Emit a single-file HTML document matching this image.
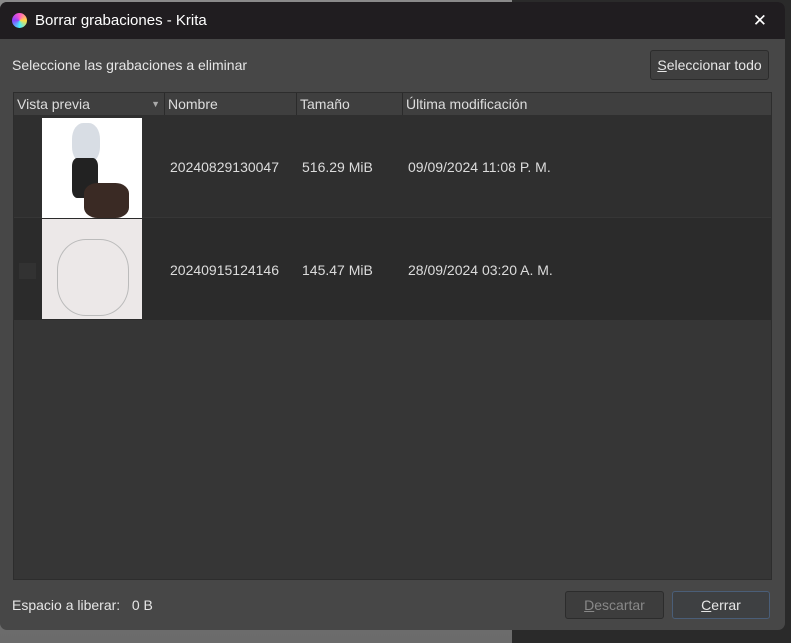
<!DOCTYPE html>
<html><head><style>
body{margin:0;width:791px;height:643px;overflow:hidden;background:#2a2a2a;font-family:"Liberation Sans",sans-serif;position:relative}
.bgl{position:absolute;left:0;top:0;width:512px;height:643px;background:linear-gradient(#8a8a8a,#6b6b6b)}
.win{position:absolute;left:0;top:2px;width:785px;height:628px;background:#474747;border-radius:7px;overflow:hidden}
.title{height:37px;background:#201d20;color:#fff;font-size:15px;line-height:37px;padding-left:35px;position:relative}
.t{position:absolute;color:#e6e6e6;font-size:14px}
.btn{position:absolute;border:1px solid #2c2c2c;border-radius:3px;background:#3f3f3f;color:#e6e6e6;font-size:14px;text-align:center}
.tbl{position:absolute;left:13px;top:90px;width:757px;height:486px;background:#363636;border:1px solid #2d2d2d}
.hd{position:absolute;top:0;height:22px;background:#3f3f3f;color:#ddd;font-size:14px;line-height:22px;padding-left:3px;box-sizing:border-box;border-right:1px solid #2b2b2b}
.row{position:absolute;left:0;width:757px;height:102px}
.cell{position:absolute;color:#dcdcdc;font-size:14px;top:44px}
</style></head><body>
<div class="bgl"></div>
<div class="win">
<div class="title"><span style="position:absolute;left:12px;top:11px;width:15px;height:15px;border-radius:50%;background:conic-gradient(#f5c,#fd4,#4ef,#84f,#f5c)"></span>Borrar grabaciones - Krita<span style="position:absolute;right:18px;top:0;font-size:17px;font-weight:300">✕</span></div>
<div class="t" style="left:12px;top:55px">Seleccione las grabaciones a eliminar</div>
<div class="btn" style="left:650px;top:48px;width:117px;height:28px;line-height:28px"><u>S</u>eleccionar todo</div>
<div class="tbl">
<div class="hd" style="left:0;width:151px">Vista previa<span style="position:absolute;right:4px;font-size:9px;color:#aaa">▼</span></div>
<div class="hd" style="left:151px;width:132px">Nombre</div>
<div class="hd" style="left:283px;width:106px">Tamaño</div>
<div class="hd" style="left:389px;width:368px;border-right:0">Última modificación</div>
<div class="row" style="top:22px;background:#2f2f2f">
<div style="position:absolute;left:28px;top:3px;width:100px;height:100px;background:#fff;overflow:hidden">
<div style="position:absolute;left:30px;top:5px;width:28px;height:40px;background:#d8dde4;border-radius:40%"></div>
<div style="position:absolute;left:30px;top:40px;width:26px;height:40px;background:#222;border-radius:20%"></div>
<div style="position:absolute;left:42px;top:65px;width:45px;height:35px;background:#3a2a24;border-radius:30%"></div>
</div>
<div class="cell" style="left:156px">20240829130047</div>
<div class="cell" style="left:288px">516.29 MiB</div>
<div class="cell" style="left:394px">09/09/2024 11:08 P. M.</div>
</div>
<div class="row" style="top:125px;background:#2b2b2b">
<div style="position:absolute;left:5px;top:45px;width:17px;height:16px;background:#323232"></div>
<div style="position:absolute;left:28px;top:1px;width:100px;height:100px;background:#ece8e8"><div style="position:absolute;left:15px;top:20px;width:70px;height:75px;border:1px solid #bbb;border-radius:40%"></div></div>
<div class="cell" style="left:156px">20240915124146</div>
<div class="cell" style="left:288px">145.47 MiB</div>
<div class="cell" style="left:394px">28/09/2024 03:20 A. M.</div>
</div>
</div>
<div class="t" style="left:12px;top:595px">Espacio a liberar:&nbsp;&nbsp; 0 B</div>
<div class="btn" style="left:565px;top:589px;width:97px;height:26px;line-height:26px;color:#888;background:#3d3d3d"><u>D</u>escartar</div>
<div class="btn" style="left:672px;top:589px;width:96px;height:26px;line-height:26px;border-color:#4a5e78;background:#3e4042"><u>C</u>errar</div>
</div>
</body></html>
